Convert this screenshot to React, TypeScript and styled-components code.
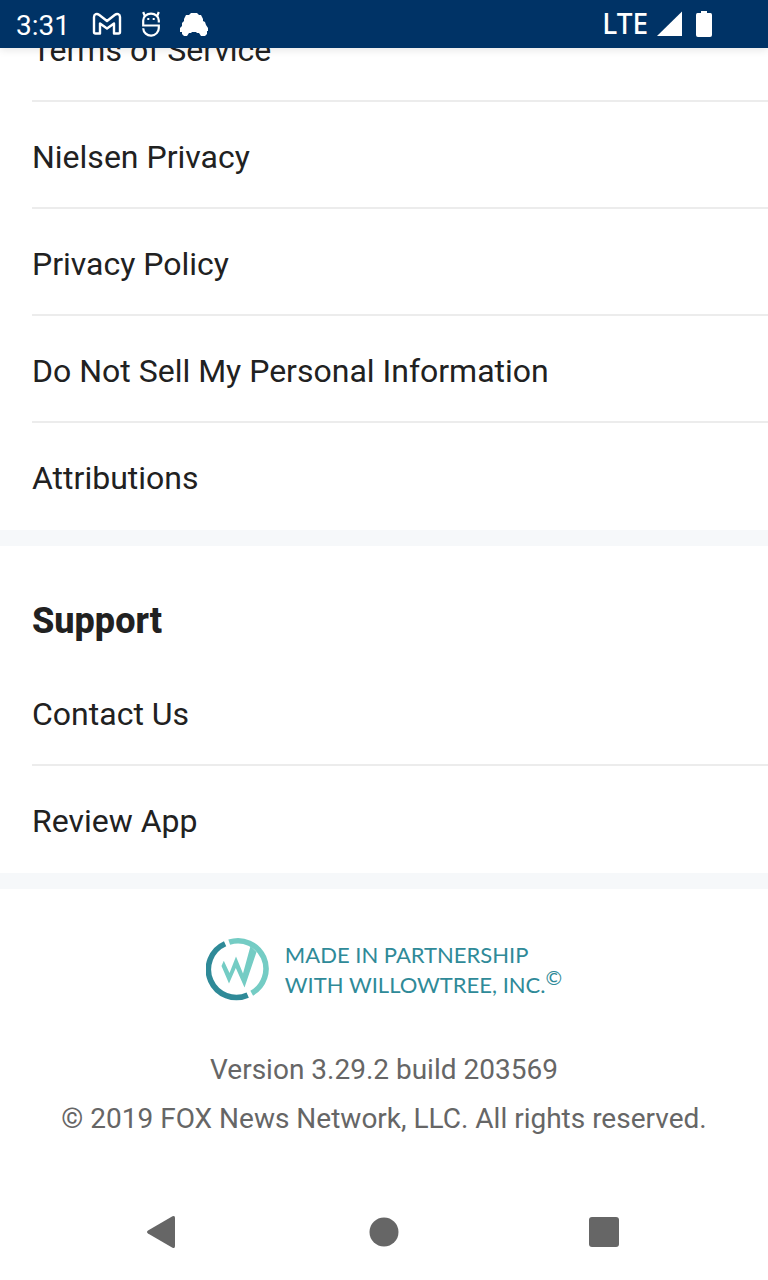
import React from "react";
import styled, { createGlobalStyle } from "styled-components";

const GlobalStyle = createGlobalStyle`
  * { box-sizing: border-box; }
  body {
    margin: 0;
    background: #ffffff;
    color: #212121;
    font-family: Roboto, "Liberation Sans", sans-serif;
  }
`;

const Screen = styled.div`
  display: flex;
  flex-direction: column;
  min-height: 100vh;
`;

const StatusBar = styled.header`
  position: sticky;
  top: 0;
  z-index: 1;
  display: flex;
  align-items: center;
  justify-content: space-between;
  height: 48px;
  padding: 0 56px 0 16px;
  background: #003366;
  color: #ffffff;
  font-size: 28px;
  line-height: 44px;
  box-shadow: 0 2px 8px rgba(0, 0, 0, 0.1);
`;

const StatusGroup = styled.div<{ $gap: number }>`
  display: flex;
  align-items: center;
  gap: ${(p) => p.$gap}px;
  svg { display: block; }
`;

const Time = styled.time`
  padding: 4px 2px 0 0;
`;

const Network = styled.span`
  padding-bottom: 2px;
  font-family: "Noto Sans", Roboto, sans-serif;
  font-weight: 500;
`;

const Content = styled.main`
  flex: 1;
  margin-top: -53px;
`;

const Section = styled.section`
  border-bottom: 16px solid #f6f8fa;
`;

const SectionTitle = styled.h2`
  margin: 0;
  padding: 51px 32px 14px;
  font-size: 36px;
  font-weight: 800;
  line-height: 48px;
`;

const List = styled.ul`
  margin: 0;
  padding: 0 0 0 32px;
  list-style: none;
`;

const Row = styled.li`
  height: 107px;
  border-bottom: 2px solid #ececec;
  &:last-child { border-bottom-color: transparent; }
`;

const RowLink = styled.a`
  display: block;
  padding: 35px 0 30px;
  color: inherit;
  font-size: 32px;
  line-height: 40px;
  text-decoration: none;
`;

const About = styled.footer`
  padding: 48px 32px 40px;
  color: #666666;
  font-size: 28px;
  line-height: 49px;
  text-align: center;
  p { margin: 0; }
`;

const Partner = styled.div`
  display: flex;
  justify-content: center;
  gap: 16px;
  margin-bottom: 44px;
  color: #2f8a98;
  font-family: Lato, "Liberation Sans", sans-serif;
  font-size: 22px;
  line-height: 30px;
  text-align: left;
  svg { display: block; }
`;

const PartnerText = styled.p`
  padding-top: 3px;
`;

const Copyright = styled.sup`
  font-size: 20px;
  line-height: 0;
`;

const NavBar = styled.nav`
  display: flex;
  justify-content: center;
  gap: 124px;
  height: 96px;
`;

const NavButton = styled.button`
  width: 96px;
  padding: 0;
  border: 0;
  background: none;
  color: #666666;
  svg { display: block; margin: 0 auto; }
`;

const LEGAL = [
  "Terms of Service",
  "Nielsen Privacy",
  "Privacy Policy",
  "Do Not Sell My Personal Information",
  "Attributions",
];
const SUPPORT = ["Contact Us", "Review App"];

function LinkList({ items }: { items: string[] }) {
  return (
    <List>
      {items.map((item) => (
        <Row key={item}>
          <RowLink href="#">{item}</RowLink>
        </Row>
      ))}
    </List>
  );
}

const MailIcon = () => (
  <svg width="30" height="24" viewBox="0 0 30 24" fill="none" stroke="#fff" strokeWidth="2.4" strokeLinejoin="round" aria-hidden="true">
    <path d="M2 5C2 2 5 1.200 7 2.700L15 9L23 2.700C25 1.200 28 2 28 5V20Q28 21.500 26.500 21.500H22V11.500L15 16.500L8 11.500V21.500H3.500Q2 21.500 2 20Z" />
  </svg>
);

const MaskIcon = () => (
  <svg width="18" height="26" viewBox="0 0 18 26" fill="none" aria-hidden="true">
    <g stroke="#fff" strokeWidth="2.200">
      <path d="M16.800 11.500V9.500A7.800 6.800 0 0 0 1.200 9.500V14.500H16.800V16.500A7.800 7.800 0 0 1 1.200 17.200" />
      <path d="M1.200 1L2.800 5M16.800 1L15.200 5" />
    </g>
    <path d="M5.300 7H7.300V9H5.300ZM10.700 7H12.700V9H10.700Z" fill="#fff" />
  </svg>
);

const CarIcon = () => (
  <svg width="28" height="24" viewBox="0 0 28 24" fill="#fff" aria-hidden="true">
    <path d="M6 3H9L11 1H17L19 3H21L22 5L23 7V9L25 10L26 13L28 16V19H27V22L25 24H21L19 21H17L16 20H12L11 21H9L7 24H4L2 22V20H0V16L2 14V11L4 9V7Z" />
  </svg>
);

const SignalIcon = () => (
  <svg width="26" height="26" viewBox="0 0 26 26" fill="#fff" aria-hidden="true">
    <path d="M26 0.500V25H1Z" />
  </svg>
);

const BatteryIcon = () => (
  <svg width="22" height="26" viewBox="-6 0 22 26" fill="#fff" aria-hidden="true">
    <path d="M5 0H11V2H14.500Q16 2 16 4V24Q16 26 14 26H2Q0 26 0 24V4Q0 2 1.500 2H5Z" />
  </svg>
);

const PartnerLogo = () => (
  <svg width="63" height="64" viewBox="-0.500 -1 63 64" fill="none" aria-hidden="true">
    <path d="M18.600 5.800A28 28 0 0 0 41.200 57.100" stroke="#2f8a98" strokeWidth="5.600" />
    <path d="M22.700 4.200A28 28 0 0 1 45.200 55.200" stroke="#74ccc4" strokeWidth="5.600" />
    <path d="M17.300 22.700L23 35L29.500 18.500L36.500 35.500L44 8L50 14L38 49.500L29.300 30L22.500 45.500L15 28Z" fill="#74ccc4" />
  </svg>
);

export default function App() {
  return (
    <Screen>
      <GlobalStyle />
      <StatusBar>
        <StatusGroup $gap={20}>
          <Time>3:31</Time>
          <MailIcon />
          <MaskIcon />
          <CarIcon />
        </StatusGroup>
        <StatusGroup $gap={8}>
          <Network>LTE</Network>
          <SignalIcon />
          <BatteryIcon />
        </StatusGroup>
      </StatusBar>
      <Content>
        <Section>
          <LinkList items={LEGAL} />
        </Section>
        <Section>
          <SectionTitle>Support</SectionTitle>
          <LinkList items={SUPPORT} />
        </Section>
        <About>
          <Partner>
            <PartnerLogo />
            <PartnerText>
              MADE IN PARTNERSHIP
              <br />
              WITH WILLOWTREE, INC.<Copyright>©</Copyright>
            </PartnerText>
          </Partner>
          <p>Version 3.29.2 build 203569</p>
          <p>© 2019 FOX News Network, LLC. All rights reserved.</p>
        </About>
      </Content>
      <NavBar>
        <NavButton type="button" aria-label="Back">
          <svg width="36" height="34" viewBox="0 0 36 34" fill="currentColor">
            <path d="M26.500 1.300Q29 0 29 3V31Q29 34 26.500 32.700L2 18.500Q0 17 2 15.500Z" />
          </svg>
        </NavButton>
        <NavButton type="button" aria-label="Home">
          <svg width="30" height="30" viewBox="0 0 30 30" fill="currentColor">
            <circle cx="15" cy="15" r="14.500" />
          </svg>
        </NavButton>
        <NavButton type="button" aria-label="Recent apps">
          <svg width="30" height="30" viewBox="0 0 30 30" fill="currentColor">
            <rect width="30" height="30" rx="3" />
          </svg>
        </NavButton>
      </NavBar>
    </Screen>
  );
}
